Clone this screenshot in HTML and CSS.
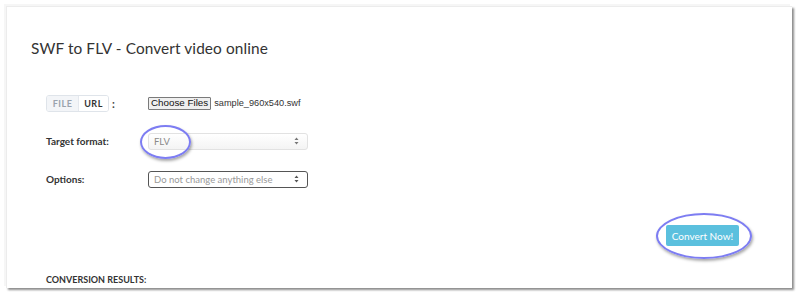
FILE: index.html
```html
<!DOCTYPE html>
<html>
<head>
<meta charset="utf-8">
<link rel="stylesheet" href="styles.css">
</head>
<body>
<div class="card">
  <h1 class="title">SWF to FLV - Convert video online</h1>
  <div class="form">
    <div class="row">
      <div class="label">
        <span class="toggle"><span class="tg-file">FILE</span><span class="tg-url">URL</span></span><span class="colon">:</span>
      </div>
      <div class="control file-ctl">
        <button class="choose">Choose Files</button><span class="fname">sample_960x540.swf</span>
      </div>
    </div>
    <div class="row">
      <div class="label strong">Target format:</div>
      <div class="control">
        <div class="select light"><span>FLV</span>
          <svg class="arr" width="5" height="8" viewBox="0 0 5 8"><path d="M2.5 0.5 L4.5 3 L0.5 3 Z M0.5 5 L4.5 5 L2.5 7.5 Z" fill="#777"/></svg>
        </div>
      </div>
    </div>
    <div class="row">
      <div class="label strong">Options:</div>
      <div class="control">
        <div class="select dark"><span>Do not change anything else</span>
          <svg class="arr" width="5" height="8" viewBox="0 0 5 8"><path d="M2.5 0.5 L4.5 3 L0.5 3 Z M0.5 5 L4.5 5 L2.5 7.5 Z" fill="#555"/></svg>
        </div>
      </div>
    </div>
  </div>
  <div class="actions">
    <button class="convert">Convert Now!</button>
  </div>
  <div class="results">CONVERSION RESULTS:</div>
  <div class="ring ring-format"></div>
  <div class="ring ring-convert"></div>
</div>
</body>
</html>
```
FILE: styles.css
```css
* { box-sizing: border-box; }
html, body { margin: 0; padding: 0; background: #fff; }
body { width: 800px; height: 296px; overflow: hidden; font-family: Lato, "Open Sans", sans-serif; color: #333; }

.card {
  position: relative;
  margin: 6px 0 0 6px;
  width: 786px;
  height: 282px;
  background: #fff;
  border-top: 1px solid #ececec;
  border-left: 1px solid #ececec;
  box-shadow: 2px 2px 2px rgba(0,0,0,0.45), -2px -2px 0 #f6f6f6;
  padding: 29px 53px 0 24px;
  overflow: hidden;
}

.title {
  margin: 0;
  font-size: 15.4px;
  line-height: 24px;
  font-weight: 400;
  color: #333;
  letter-spacing: 0.1px;
}

.form {
  margin: 33px 0 0 15px;
  display: flex;
  flex-direction: column;
  gap: 18px;
}
.row {
  display: grid;
  grid-template-columns: 102px 160px;
  height: 20px;
  align-items: center;
}
.label { display: flex; align-items: center; }
.label.strong { font-size: 10px; font-weight: 700; color: #333; }

.toggle {
  display: inline-flex;
  height: 17px;
  border: 1px solid #dfe4ea;
  border-radius: 3px;
  overflow: hidden;
  font-size: 9px;
  font-weight: 700;
  letter-spacing: 0.5px;
}
.tg-file { width: 32px; background: #f3f5f8; color: #9aa3ad; display: flex; align-items: center; justify-content: center; border-right: 1px solid #e4e8ee; }
.tg-url { width: 29px; background: #fff; color: #333; display: flex; align-items: center; justify-content: center; }
.colon { margin-left: 3px; font-size: 11px; font-weight: 700; color: #444; }

.file-ctl { display: flex; align-items: center; white-space: nowrap; }
.choose {
  font-family: "Liberation Sans", Arial, sans-serif;
  font-size: 9.8px;
  line-height: 10px;
  height: 13px;
  padding: 0 2px;
  margin: 0;
  border: 1px solid #7a7a7a;
  border-radius: 1px;
  background: #efefef;
  color: #111;
  white-space: nowrap;
}
.fname { margin-left: 3px; font-family: "Liberation Sans", Arial, sans-serif; font-size: 9.2px; color: #333; }

.select {
  display: flex;
  align-items: center;
  justify-content: space-between;
  width: 160px;
  height: 17px;
  padding: 0 8px 0 5px;
  border-radius: 3px;
  font-size: 9.5px;
  white-space: nowrap;
}
.select.light {
  border: 1px solid #e2e2e2;
  background: linear-gradient(#fff, #f4f4f4);
  color: #8a8a8a;
}
.select.dark {
  border: 1px solid #555;
  background: #fff;
  color: #999;
}

.actions {
  display: flex;
  justify-content: flex-end;
  margin-top: 36px;
}
.convert {
  width: 73px;
  height: 21px;
  padding: 0;
  border: none;
  border-radius: 2px;
  background: #5bc0de;
  color: #fff;
  font-family: Lato, sans-serif;
  font-size: 10px;
}

.results {
  margin: 27px 0 0 15px;
  font-size: 9px;
  line-height: 14px;
  font-weight: 700;
  color: #333;
}

.ring {
  position: absolute;
  border: 2px solid #7d7df2;
  border-radius: 50%;
  box-shadow: 1px 2px 3px rgba(0,0,0,0.35);
}
.ring-format { left: 133px; top: 118px; width: 51px; height: 34px; }
.ring-convert { left: 649px; top: 206px; width: 96px; height: 46px; }
```
